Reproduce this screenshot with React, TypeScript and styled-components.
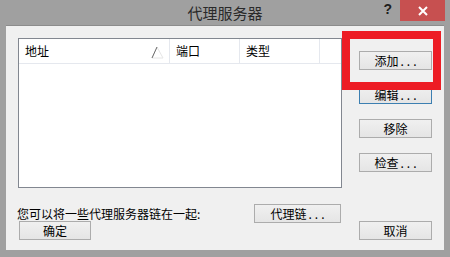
import React from "react";
import styled, { createGlobalStyle } from "styled-components";

const Global = createGlobalStyle`
  html, body { margin: 0; padding: 0; background: #a0a0a0; }
  body { font-family: "Noto Sans CJK SC", "Noto Sans", sans-serif; }
  * { box-sizing: border-box; }
`;

const Window = styled.div`
  width: 450px;
  height: 257px;
  background: #a0a0a0;
  display: flex;
  flex-direction: column;
  overflow: hidden;
`;

const TitleBar = styled.div`
  height: 26px;
  display: grid;
  grid-template-columns: 1fr auto 1fr;
  align-items: start;
`;

const Title = styled.div`
  grid-column: 2;
  font-size: 15px;
  line-height: 26px;
  color: #2a2a2a;
`;

const Controls = styled.div`
  grid-column: 3;
  display: flex;
  justify-content: flex-end;
  align-items: flex-start;
  padding-right: 5px;
`;

const Help = styled.div`
  font-family: "Liberation Sans", sans-serif;
  font-weight: bold;
  font-size: 14px;
  line-height: 18px;
  color: #1e1e1e;
  margin-right: 8px;
`;

const Close = styled.div`
  width: 45px;
  height: 21px;
  background: #c75050;
  display: flex;
  align-items: center;
  justify-content: center;
`;

const Client = styled.div`
  position: relative;
  margin: 0 6px;
  height: 224px;
  background: #f0f0f0;
  box-shadow: 0 -1px 0 #8c8c8c;
  padding: 12px 12px 10px 12px;
  display: flex;
  flex-direction: column;
  font-size: 12px;
  color: #000;
`;

const TopRow = styled.div`
  display: flex;
  gap: 17px;
`;

const ListView = styled.div`
  width: 324px;
  height: 150px;
  background: #fff;
  border: 1px solid #828790;
`;

const Header = styled.div`
  height: 25px;
  display: flex;
  border-bottom: 1px solid #e5e8ee;
`;

const HeaderCell = styled.div<{ $w: number }>`
  width: ${(p) => p.$w}px;
  flex: none;
  position: relative;
  display: flex;
  align-items: center;
  padding-left: 6px;
  border-right: 1px solid #e5e8ee;
  line-height: 24px;
`;

const SortArrow = styled.svg`
  position: absolute;
  right: 4px;
  top: 6px;
`;

const ButtonColumn = styled.div`
  display: flex;
  flex-direction: column;
  padding-top: 13px;
  gap: 15px;
`;

const Button = styled.div<{ $w?: number; $default?: boolean }>`
  width: ${(p) => p.$w ?? 73}px;
  height: 19px;
  border: 1px solid ${(p) => (p.$default ? "#3c7fb1" : "#acacac")};
  background: linear-gradient(#f0f0f0, #e5e5e5);
  display: flex;
  align-items: center;
  justify-content: center;
  font-size: 12px;
  line-height: 17px;
  color: #000;
`;

const Dots = styled.span`
  letter-spacing: 3px;
  margin-left: 2px;
  margin-right: -3px;
`;

const BottomArea = styled.div`
  margin-top: 16px;
  display: grid;
  grid-template-columns: 236px 105px 73px;
  height: 36px;
`;

const LeftCol = styled.div`
  display: flex;
  flex-direction: column;
`;

const Note = styled.div`
  margin-top: 2px;
  height: 15px;
  line-height: 15px;
  margin-left: -1px;
  white-space: nowrap;
`;

const OkWrap = styled.div`
  margin-left: 1px;
`;

const ChainWrap = styled.div`
  align-self: start;
`;

const CancelWrap = styled.div`
  align-self: end;
`;

const Highlight = styled.div`
  position: absolute;
  left: 336px;
  top: 5px;
  width: 99px;
  height: 59px;
  border: 8px solid #ed1c24;
`;

export default function App() {
  return (
    <>
      <Global />
      <Window>
        <TitleBar>
          <Title>代理服务器</Title>
          <Controls>
            <Help>?</Help>
            <Close>
              <svg width="10" height="10" viewBox="0 0 10 10">
                <path d="M1 1 L9 9 M9 1 L1 9" stroke="#fff" strokeWidth="2" />
              </svg>
            </Close>
          </Controls>
        </TitleBar>
        <Client>
          <TopRow>
            <ListView>
              <Header>
                <HeaderCell $w={151}>
                  地址
                  <SortArrow width="14" height="14" viewBox="0 0 14 14">
                    <path d="M1 13 L6 2 L12 13 Z" fill="none" stroke="#e6e6e6" strokeWidth="1" />
                    <path d="M1 13 L6 2" stroke="#6d6d6d" strokeWidth="1" />
                  </SortArrow>
                </HeaderCell>
                <HeaderCell $w={70}>端口</HeaderCell>
                <HeaderCell $w={80}>类型</HeaderCell>
              </Header>
            </ListView>
            <ButtonColumn>
              <Button>添加<Dots>...</Dots></Button>
              <Button $default>编辑<Dots>...</Dots></Button>
              <Button>移除</Button>
              <Button>检查<Dots>...</Dots></Button>
            </ButtonColumn>
          </TopRow>
          <BottomArea>
            <LeftCol>
              <Note>您可以将一些代理服务器链在一起:</Note>
              <OkWrap>
                <Button $w={72}>确定</Button>
              </OkWrap>
            </LeftCol>
            <ChainWrap>
              <Button $w={87}>代理链<Dots>...</Dots></Button>
            </ChainWrap>
            <CancelWrap>
              <Button>取消</Button>
            </CancelWrap>
          </BottomArea>
          <Highlight />
        </Client>
      </Window>
    </>
  );
}
